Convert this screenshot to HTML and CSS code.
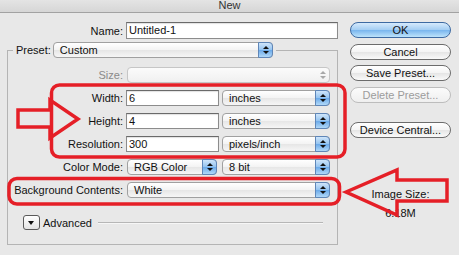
FILE: index.html
```html
<!DOCTYPE html>
<html lang="en">

<head>
  <meta charset="UTF-8">
  <title>New</title>
  <link rel="stylesheet" href="styles.css">
</head>

<body>
  <div class="titlebar">New</div>
  <div class="dialog">
    <div class="left">
      <div class="name-row">
        <span class="name-label">Name:</span>
        <div class="field name-field">Untitled-1</div>
      </div>
      <fieldset class="group">
        <legend class="preset">
          <span>Preset:</span>
          <div class="popup preset-popup">Custom<span class="stepper"></span></div>
        </legend>
        <div class="row">
          <span class="label disabled-label">Size:</span>
          <div class="popup wide disabled"><span class="stepper"></span></div>
        </div>
        <div class="row">
          <span class="label">Width:</span>
          <div class="field num">6</div>
          <div class="popup unit">inches<span class="stepper"></span></div>
        </div>
        <div class="row">
          <span class="label">Height:</span>
          <div class="field num">4</div>
          <div class="popup unit">inches<span class="stepper"></span></div>
        </div>
        <div class="row">
          <span class="label">Resolution:</span>
          <div class="field num">300</div>
          <div class="popup unit">pixels/inch<span class="stepper"></span></div>
        </div>
        <div class="row">
          <span class="label">Color Mode:</span>
          <div class="popup mode">RGB Color<span class="stepper"></span></div>
          <div class="popup unit">8 bit<span class="stepper"></span></div>
        </div>
        <div class="row">
          <span class="label">Background Contents:</span>
          <div class="popup wide">White<span class="stepper"></span></div>
        </div>
        <div class="advanced">
          <span class="disclosure"></span>
          <span>Advanced</span>
          <span class="rule"></span>
        </div>
      </fieldset>
    </div>
    <div class="right">
      <div class="btn default">OK</div>
      <div class="btn">Cancel</div>
      <div class="btn">Save Preset...</div>
      <div class="btn off">Delete Preset...</div>
      <div class="btn central">Device Central...</div>
      <div class="size-title">Image Size:</div>
      <div class="size-value">6.18M</div>
    </div>
  </div>

  <!-- red annotations drawn over the dialog -->
  <svg class="marks" width="459" height="255" viewBox="0 0 459 255">
    <rect x="51.5" y="85" width="293.5" height="72" rx="8" />
    <rect x="9" y="178.5" width="330.5" height="25.5" rx="8" />
    <polygon points="18,110 50,110 50,100 78,119 50,138 50,127 18,127" />
    <polygon points="346,192 397,170 397,180 447,180 447,201 397,201 397,215" />
  </svg>
</body>

</html>
```

FILE: styles.css
```css
body {
  margin: 0;
  width: 459px;
  height: 255px;
  overflow: hidden;
  position: relative;
  background-color: #e8e8e8;
  font-family: 'Liberation Sans', Arial, sans-serif;
  font-size: 11px;
  color: #111;
}

.titlebar {
  height: 12px;
  line-height: 10px;
  text-align: center;
  color: #333;
  background: linear-gradient(#e4e4e4, #d6d6d6);
  border-bottom: 1px solid #a2a2a2;
}

.dialog {
  display: flex;
}

.left {
  width: 343px;
  padding: 9px 0 0 7px;
}

.name-row {
  display: flex;
  align-items: center;
  height: 17px;
}

.name-label {
  width: 116px;
  margin-right: 3px;
  text-align: right;
}

.field {
  box-sizing: border-box;
  height: 16px;
  padding-left: 2px;
  line-height: 14px;
  background-color: #fff;
  border: 1px solid #8c8c8c;
  border-top-color: #6a6a6a;
  box-shadow: inset 0 1px 1px rgba(0, 0, 0, 0.12);
}

.name-field {
  width: 212px;
  height: 17px;
  line-height: 15px;
}

.group {
  box-sizing: border-box;
  width: 331px;
  margin: 3px 0 0;
  padding: 9px 6px 14px 5px;
  border: 1px solid #b4b4b4;
  min-width: 0;
}

.preset {
  padding: 0 3px;
  display: flex;
  align-items: center;
}

.preset-popup {
  width: 220px;
  margin-left: 2px;
}

.row {
  display: flex;
  align-items: center;
  height: 16px;
  margin-bottom: 7px;
}

.label {
  width: 110px;
  margin-right: 3px;
  text-align: right;
  white-space: nowrap;
}

.disabled-label {
  color: #8a8a8a;
}

.num {
  width: 93px;
  margin-right: 3px;
}

.popup {
  box-sizing: border-box;
  height: 16px;
  display: flex;
  align-items: center;
  padding-left: 6px;
  border: 1px solid #a0a0a0;
  border-radius: 4px;
  background: linear-gradient(#ffffff, #f3f3f3 50%, #e6e6e6 51%, #f6f6f6);
}

.row .popup:nth-child(2) {
  margin-left: 1px;
}

.wide {
  width: 203px;
}

.unit {
  width: 108px;
}

.mode {
  width: 90px;
  margin-right: 5px;
}

.stepper {
  box-sizing: border-box;
  width: 15px;
  height: 16px;
  margin: -1px -1px -1px auto;
  border: 1px solid #5f86b8;
  border-radius: 0 4px 4px 0;
  background: linear-gradient(#cfe5fa, #93c3f0 50%, #6aa9e9 51%, #b0d8f8);
  position: relative;
}

.stepper::before,
.stepper::after {
  content: '';
  position: absolute;
  left: 4px;
  border-left: 3px solid transparent;
  border-right: 3px solid transparent;
}

.stepper::before {
  top: 3px;
  border-bottom: 3px solid #111;
}

.stepper::after {
  bottom: 3px;
  border-top: 3px solid #111;
}

.disabled {
  border-color: #c6c6c6;
  background: linear-gradient(#fbfbfb, #f0f0f0);
}

.disabled .stepper {
  background: none;
  border-color: transparent;
}

.disabled .stepper::before {
  border-bottom-color: #a8a8a8;
}

.disabled .stepper::after {
  border-top-color: #a8a8a8;
}

.advanced {
  display: flex;
  align-items: center;
  height: 15px;
  margin-top: 17px;
  padding-left: 10px;
}

.disclosure {
  box-sizing: border-box;
  width: 17px;
  height: 15px;
  margin-right: 3px;
  border: 1px solid #5a5a5a;
  border-radius: 3px;
  background: linear-gradient(#ffffff, #e4e4e4);
  position: relative;
}

.disclosure::after {
  content: '';
  position: absolute;
  left: 4px;
  top: 5px;
  border-left: 3.5px solid transparent;
  border-right: 3.5px solid transparent;
  border-top: 4px solid #111;
}

.rule {
  flex: 1;
  height: 0;
  margin: 0 8px 0 6px;
  border-top: 1px solid #b6b6b6;
  border-bottom: 1px solid #f6f6f6;
}

.right {
  width: 101px;
  padding-top: 9px;
  text-align: center;
}

.btn {
  box-sizing: border-box;
  height: 16px;
  line-height: 14px;
  margin-bottom: 5.5px;
  border: 1px solid #6c6c6c;
  border-radius: 8px;
  color: #111;
  background: linear-gradient(#ffffff, #f4f4f4 50%, #e5e5e5 51%, #fafafa);
}

.default {
  border-color: #3d6aa2;
  background: linear-gradient(#d6eafc, #a2cdf3 50%, #78b5ee 51%, #bde3fb);
}

.off {
  color: #9c9c9c;
  border-color: #bdbdbd;
  background: linear-gradient(#fbfbfb, #efefef);
}

.central {
  margin-top: 19.5px;
}

.size-title {
  margin-top: 50px;
}

.size-value {
  margin-top: 6.5px;
}

.marks {
  position: absolute;
  top: 0;
  left: 0;
  pointer-events: none;
  fill: none;
  stroke: #e51f27;
  stroke-width: 3.5;
}
```
